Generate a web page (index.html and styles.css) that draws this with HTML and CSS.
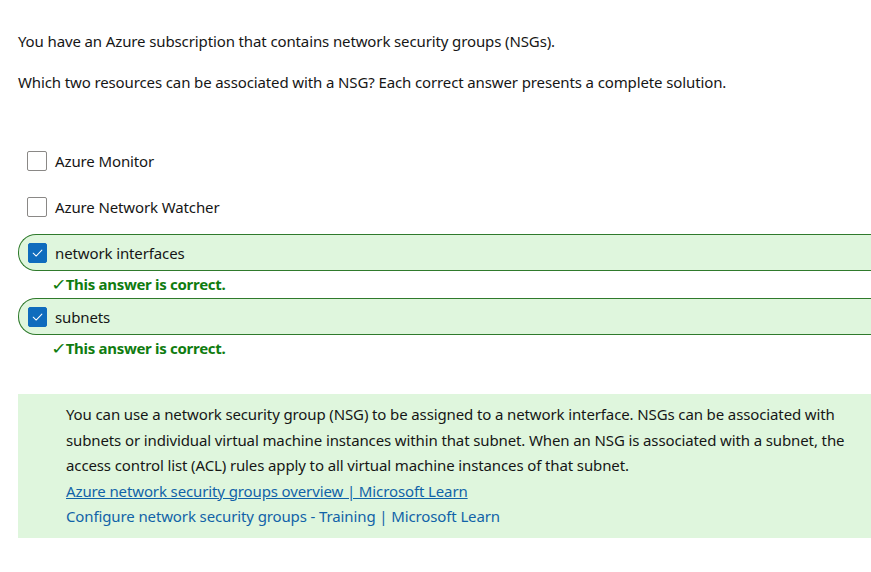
FILE: index.html
```html
<!DOCTYPE html>
<html lang="en">
<head>
<meta charset="utf-8">
<title>NSG question</title>
<link rel="stylesheet" href="styles.css">
</head>
<body>
<main class="page">
  <p class="q q1">You have an Azure subscription that contains network security groups (NSGs).</p>
  <p class="q q2">Which two resources can be associated with a NSG? Each correct answer presents a complete solution.</p>

  <ul class="options">
    <li class="option">
      <span class="box"></span>
      <span class="label">Azure Monitor</span>
    </li>
    <li class="option">
      <span class="box"></span>
      <span class="label">Azure Network Watcher</span>
    </li>
    <li class="option correct">
      <span class="box checked"><svg viewBox="0 0 20 20" width="20" height="20"><path d="M5.5 10.2 L8.6 13.2 L14.6 6.9" fill="none" stroke="#fff" stroke-width="1.1" stroke-linecap="round" stroke-linejoin="round"/></svg></span>
      <span class="label">network interfaces</span>
    </li>
    <li class="feedback"><span class="tick">✓</span>This answer is correct.</li>
    <li class="option correct">
      <span class="box checked"><svg viewBox="0 0 20 20" width="20" height="20"><path d="M5.5 10.2 L8.6 13.2 L14.6 6.9" fill="none" stroke="#fff" stroke-width="1.1" stroke-linecap="round" stroke-linejoin="round"/></svg></span>
      <span class="label">subnets</span>
    </li>
    <li class="feedback"><span class="tick">✓</span>This answer is correct.</li>
  </ul>

  <section class="explain">
    <p class="line">You can use a network security group (NSG) to be assigned to a network interface. NSGs can be associated with</p>
    <p class="line">subnets or individual virtual machine instances within that subnet. When an NSG is associated with a subnet, the</p>
    <p class="line">access control list (ACL) rules apply to all virtual machine instances of that subnet.</p>
    <p class="line"><a class="link under" href="#">Azure network security groups overview | Microsoft Learn</a></p>
    <p class="line"><a class="link" href="#">Configure network security groups - Training | Microsoft Learn</a></p>
  </section>
</main>
</body>
</html>
```

FILE: styles.css
```css
html, body {
  margin: 0;
  padding: 0;
  background: #ffffff;
  overflow: hidden;
}

body {
  font-family: "Segoe UI", "Noto Sans", "Open Sans", sans-serif;
  font-size: 15px;
  letter-spacing: -0.12px;
  color: #161616;
}

.page {
  padding: 0 0 0 18px;
}

.q {
  margin: 0;
  line-height: 20px;
  white-space: nowrap;
}

.q1 {
  padding-top: 31px;
}

.q2 {
  margin-top: 21px;
}

.options {
  list-style: none;
  margin: 50px 0 0 0;
  padding: 0;
}

.option {
  display: flex;
  align-items: center;
  gap: 8px;
  height: 37px;
  box-sizing: border-box;
  padding-left: 8px;
  margin-bottom: 9px;
  border: 1px solid transparent;
  border-right: none;
}

.option.correct {
  background: #dff6dd;
  border: 1px solid #2f7a2c;
  border-right: none;
  border-radius: 18px 0 0 18px;
  margin-bottom: 0;
  padding-left: 9px;
}

.box {
  width: 20px;
  height: 20px;
  box-sizing: border-box;
  border: 1px solid #8a8886;
  border-radius: 2px;
  background: #fff;
  flex: none;
  display: flex;
}

.option.correct .box {
  width: 19px;
}

.box.checked {
  background: #0f6cbd;
  border-color: #0f6cbd;
}

.box svg {
  margin: -1px;
}

.label {
  line-height: 20px;
}

.feedback {
  height: 27px;
  line-height: 27px;
  padding-left: 34px;
  color: #107c10;
  font-weight: bold;
  font-size: 15px;
  letter-spacing: -0.3px;
}

.tick {
  display: inline-block;
  font-weight: normal;
  font-size: 16px;
  margin-right: 1px;
  transform: scaleX(1.2);
}

.explain {
  margin-top: 32px;
  background: #dff6dd;
  padding: 8px 0 8px 48px;
}

.line {
  margin: 0;
  line-height: 25.5px;
  white-space: nowrap;
}

.link {
  color: #1163a8;
  text-decoration: none;
}

.link.under {
  text-decoration: underline;
}
```
